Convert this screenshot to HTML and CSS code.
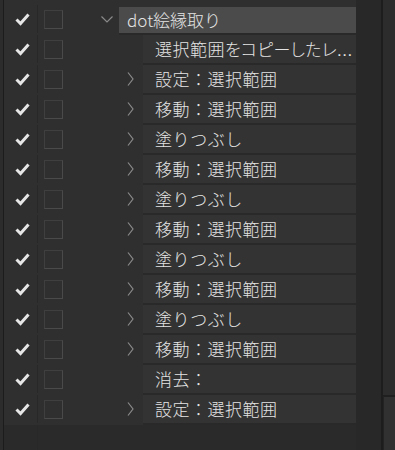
FILE: index.html
```html
<!DOCTYPE html>
<html lang="ja">
<head>
    <meta charset="UTF-8">
    <title>Layers</title>
    <link rel="stylesheet" href="styles.css">
</head>
<body>
    <div class="panel">
        <div class="edge"></div>
        <div class="layers">
            <div class="list">
                <div class="row">
                    <div class="vis"><svg class="check" width="15" height="13" viewBox="0 0 15 13"><polyline points="1.5,6.5 5.5,10.5 13.5,1.5"/></svg></div>
                    <div class="lock"><span class="box"></span></div>
                    <div class="twisty lvl0"><svg class="down" width="12" height="7" viewBox="0 0 12 7"><polyline points="0.5,0.5 6,6 11.5,0.5"/></svg></div>
                    <div class="name head">dot絵縁取り</div>
                </div>
                <div class="row">
                    <div class="vis"><svg class="check" width="15" height="13" viewBox="0 0 15 13"><polyline points="1.5,6.5 5.5,10.5 13.5,1.5"/></svg></div>
                    <div class="lock"><span class="box"></span></div>
                    <div class="twisty lvl1"></div>
                    <div class="name">選択範囲<span class="kana">をコピーしたレ</span><span class="dots">...</span></div>
                </div>
                <div class="row">
                    <div class="vis"><svg class="check" width="15" height="13" viewBox="0 0 15 13"><polyline points="1.5,6.5 5.5,10.5 13.5,1.5"/></svg></div>
                    <div class="lock"><span class="box"></span></div>
                    <div class="twisty lvl1"><svg class="right" width="7" height="14" viewBox="0 0 7 14"><polyline points="1,0.5 6,7 1,13.5"/></svg></div>
                    <div class="name">設定：選択範囲</div>
                </div>
                <div class="row">
                    <div class="vis"><svg class="check" width="15" height="13" viewBox="0 0 15 13"><polyline points="1.5,6.5 5.5,10.5 13.5,1.5"/></svg></div>
                    <div class="lock"><span class="box"></span></div>
                    <div class="twisty lvl1"><svg class="right" width="7" height="14" viewBox="0 0 7 14"><polyline points="1,0.5 6,7 1,13.5"/></svg></div>
                    <div class="name">移動：選択範囲</div>
                </div>
                <div class="row">
                    <div class="vis"><svg class="check" width="15" height="13" viewBox="0 0 15 13"><polyline points="1.5,6.5 5.5,10.5 13.5,1.5"/></svg></div>
                    <div class="lock"><span class="box"></span></div>
                    <div class="twisty lvl1"><svg class="right" width="7" height="14" viewBox="0 0 7 14"><polyline points="1,0.5 6,7 1,13.5"/></svg></div>
                    <div class="name">塗りつぶし</div>
                </div>
                <div class="row">
                    <div class="vis"><svg class="check" width="15" height="13" viewBox="0 0 15 13"><polyline points="1.5,6.5 5.5,10.5 13.5,1.5"/></svg></div>
                    <div class="lock"><span class="box"></span></div>
                    <div class="twisty lvl1"><svg class="right" width="7" height="14" viewBox="0 0 7 14"><polyline points="1,0.5 6,7 1,13.5"/></svg></div>
                    <div class="name">移動：選択範囲</div>
                </div>
                <div class="row">
                    <div class="vis"><svg class="check" width="15" height="13" viewBox="0 0 15 13"><polyline points="1.5,6.5 5.5,10.5 13.5,1.5"/></svg></div>
                    <div class="lock"><span class="box"></span></div>
                    <div class="twisty lvl1"><svg class="right" width="7" height="14" viewBox="0 0 7 14"><polyline points="1,0.5 6,7 1,13.5"/></svg></div>
                    <div class="name">塗りつぶし</div>
                </div>
                <div class="row">
                    <div class="vis"><svg class="check" width="15" height="13" viewBox="0 0 15 13"><polyline points="1.5,6.5 5.5,10.5 13.5,1.5"/></svg></div>
                    <div class="lock"><span class="box"></span></div>
                    <div class="twisty lvl1"><svg class="right" width="7" height="14" viewBox="0 0 7 14"><polyline points="1,0.5 6,7 1,13.5"/></svg></div>
                    <div class="name">移動：選択範囲</div>
                </div>
                <div class="row">
                    <div class="vis"><svg class="check" width="15" height="13" viewBox="0 0 15 13"><polyline points="1.5,6.5 5.5,10.5 13.5,1.5"/></svg></div>
                    <div class="lock"><span class="box"></span></div>
                    <div class="twisty lvl1"><svg class="right" width="7" height="14" viewBox="0 0 7 14"><polyline points="1,0.5 6,7 1,13.5"/></svg></div>
                    <div class="name">塗りつぶし</div>
                </div>
                <div class="row">
                    <div class="vis"><svg class="check" width="15" height="13" viewBox="0 0 15 13"><polyline points="1.5,6.5 5.5,10.5 13.5,1.5"/></svg></div>
                    <div class="lock"><span class="box"></span></div>
                    <div class="twisty lvl1"><svg class="right" width="7" height="14" viewBox="0 0 7 14"><polyline points="1,0.5 6,7 1,13.5"/></svg></div>
                    <div class="name">移動：選択範囲</div>
                </div>
                <div class="row">
                    <div class="vis"><svg class="check" width="15" height="13" viewBox="0 0 15 13"><polyline points="1.5,6.5 5.5,10.5 13.5,1.5"/></svg></div>
                    <div class="lock"><span class="box"></span></div>
                    <div class="twisty lvl1"><svg class="right" width="7" height="14" viewBox="0 0 7 14"><polyline points="1,0.5 6,7 1,13.5"/></svg></div>
                    <div class="name">塗りつぶし</div>
                </div>
                <div class="row">
                    <div class="vis"><svg class="check" width="15" height="13" viewBox="0 0 15 13"><polyline points="1.5,6.5 5.5,10.5 13.5,1.5"/></svg></div>
                    <div class="lock"><span class="box"></span></div>
                    <div class="twisty lvl1"><svg class="right" width="7" height="14" viewBox="0 0 7 14"><polyline points="1,0.5 6,7 1,13.5"/></svg></div>
                    <div class="name">移動：選択範囲</div>
                </div>
                <div class="row">
                    <div class="vis"><svg class="check" width="15" height="13" viewBox="0 0 15 13"><polyline points="1.5,6.5 5.5,10.5 13.5,1.5"/></svg></div>
                    <div class="lock"><span class="box"></span></div>
                    <div class="twisty lvl1"></div>
                    <div class="name">消去：</div>
                </div>
                <div class="row">
                    <div class="vis"><svg class="check" width="15" height="13" viewBox="0 0 15 13"><polyline points="1.5,6.5 5.5,10.5 13.5,1.5"/></svg></div>
                    <div class="lock"><span class="box"></span></div>
                    <div class="twisty lvl1"><svg class="right" width="7" height="14" viewBox="0 0 7 14"><polyline points="1,0.5 6,7 1,13.5"/></svg></div>
                    <div class="name">設定：選択範囲</div>
                </div>
            </div>
            <div class="rest"><div class="vis"></div></div>
        </div>
        <div class="gutter"></div>
        <div class="scroll">
            <div class="track"></div>
            <div class="thumb"></div>
        </div>
    </div>
</body>
</html>
```

FILE: styles.css
```css
* { margin: 0; padding: 0; box-sizing: border-box; }
body {
    background: #2a2a2a;
    font-family: "Noto Sans CJK JP", "Noto Sans", sans-serif;
    color: #e4e4e4;
    width: 395px; height: 450px;
    overflow: hidden;
}
.panel { display: flex; height: 450px; }
.edge { width: 4px; background: #2c2c2c; border-right: 1px solid #1c1c1c; }
.layers { width: 352px; display: flex; flex-direction: column; }
.list { background: #2f2f2f; padding-top: 5px; }
.row { display: flex; height: 30px; }
.vis {
    width: 34px; height: 28px;
    border-right: 1px solid #282828;
    display: flex; align-items: center;
    padding-left: 11px;
}
.check polyline { fill: none; stroke: #e6e6e6; stroke-width: 3; }
.lock { width: 32px; height: 28px; display: flex; align-items: center; padding-left: 6px; }
.box {
    width: 19px; height: 19px;
    border: 1px solid #4a4a4a;
    border-top-color: #3f3f3f; border-left-color: #3f3f3f;
}
.twisty { width: 24px; height: 28px; display: flex; align-items: center; justify-content: center; }
.lvl0 { margin-left: 25px; }
.lvl1 { margin-left: 49px; padding-right: 1px; }
.twisty polyline { fill: none; stroke: #8a8a8a; stroke-width: 1.2; }
.name {
    flex: 1; height: 30px;
    background: #333;
    border-bottom: 2px solid #292929;
    padding-left: 12px;
    font-size: 17px; font-weight: 300; line-height: 28px;
    letter-spacing: 0.5px;
    white-space: nowrap; overflow: hidden;
}
.name.head {
    height: 28px; margin-top: 2px;
    background: #4b4b4b;
    padding-left: 8px; line-height: 26px;
    letter-spacing: 0;
}
.kana { font-feature-settings: "palt"; letter-spacing: 0.3px; }
.dots { font-family: "Liberation Sans", sans-serif; letter-spacing: 0.5px; }
.rest { flex: 1; background: #2a2a2a; }
.rest .vis { height: 100%; }
.gutter { width: 25px; background: #282828; }
.scroll {
    width: 14px;
    border-left: 2px solid #1d1d1d;
    background: #2c2c2c;
    display: flex; flex-direction: column;
}
.track { height: 395px; }
.thumb { flex: 1; background: #313131; border-top: 2px solid #1f1f1f; border-left: 1px solid #232323; }
```
